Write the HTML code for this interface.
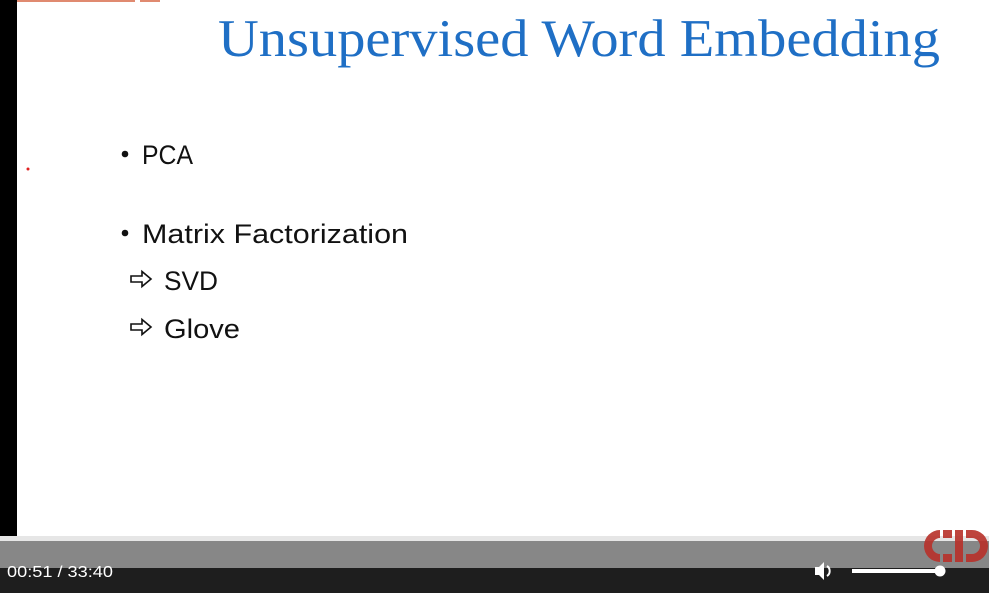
<!DOCTYPE html>
<html><head><style>
html,body{margin:0;padding:0;width:989px;height:593px;overflow:hidden;background:#fff;}
svg{display:block}
</style></head><body>
<svg width="989" height="593" xmlns="http://www.w3.org/2000/svg">
<rect x="0" y="0" width="989" height="593" fill="#fff"/>
<rect x="0" y="0" width="17" height="541" fill="#000"/>
<rect x="17" y="0" width="118" height="2" fill="#e08a70"/>
<rect x="140" y="0" width="20" height="2" fill="#e08a70"/>
<circle cx="28" cy="169" r="1.5" fill="#e02020"/>
<text x="218" y="56" font-family="Liberation Serif, serif" font-size="53" fill="#1f6fc5" textLength="722" lengthAdjust="spacingAndGlyphs">Unsupervised Word Embedding</text>
<g font-family="Liberation Sans, sans-serif" font-size="27" fill="#111">
<circle cx="125" cy="154" r="3.3" fill="#111"/>
<text x="142" y="164" textLength="51" lengthAdjust="spacingAndGlyphs">PCA</text>
<circle cx="125" cy="233" r="3.3" fill="#111"/>
<text x="142" y="243" textLength="266" lengthAdjust="spacingAndGlyphs">Matrix Factorization</text>
<text x="164" y="290" textLength="54" lengthAdjust="spacingAndGlyphs">SVD</text>
<text x="164" y="338" textLength="76" lengthAdjust="spacingAndGlyphs">Glove</text>
</g>
<g fill="none" stroke="#111" stroke-width="1.6" stroke-linejoin="miter">
<path d="M131 276 h11 v-4.5 l9 7.5 l-9 7.5 v-4.5 h-11 z"/>
<path d="M131 324 h11 v-4.5 l9 7.5 l-9 7.5 v-4.5 h-11 z"/>
</g>
<rect x="0" y="536" width="989" height="5" fill="#e6e6e6"/>
<rect x="0" y="541" width="989" height="27" fill="#878787"/>
<rect x="0" y="568" width="989" height="25" fill="#1e1e1e"/>
<g fill="#b8312a" opacity="0.9">
<path d="M940 530 a16 16 0 0 0 0 32 v-8 a8 8 0 0 1 0 -16 z"/>
<rect x="943" y="530" width="9" height="8"/>
<rect x="943" y="554" width="9" height="8"/>
<rect x="955" y="530" width="8" height="32"/>
<path d="M966 530 h6 a16 16 0 0 1 0 32 h-6 v-8 h6 a8 8 0 0 0 0 -16 h-6 z"/>
</g>
<text x="7" y="577" font-family="Liberation Sans, sans-serif" font-size="16" fill="#fff" textLength="106" lengthAdjust="spacingAndGlyphs">00:51 / 33:40</text>
<path d="M815 567 h4 l5 -5 v18 l-5 -5 h-4 z" fill="#fff"/>
<path d="M827 566 a6 6 0 0 1 0 10" stroke="#fff" stroke-width="2" fill="none"/>
<rect x="852" y="569" width="88" height="4" fill="#fff"/>
<circle cx="940" cy="571" r="5.5" fill="#fff"/>
</svg>
</body></html>
